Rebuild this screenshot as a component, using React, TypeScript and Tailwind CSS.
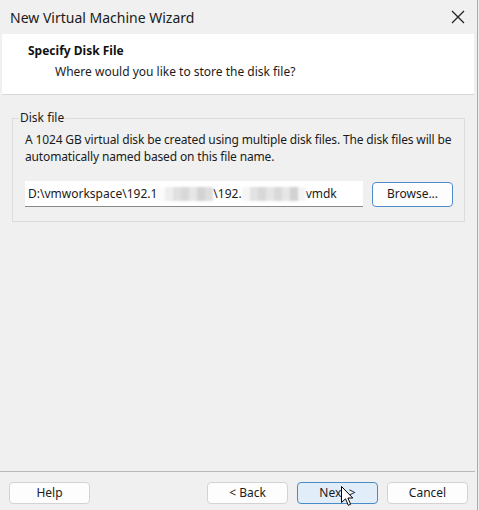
import React from 'react';

const font = "font-['Noto_Sans','Liberation_Sans',sans-serif]";

// pixelated redaction blocks over the path
const Mosaic: React.FC<{ shades: string[] }> = ({ shades }) => (
  <span className="inline-flex h-[14px] align-middle blur-[1px]">
    {shades.map((s, i) => (
      <span key={i} className="inline-block w-[8px] h-full" style={{ backgroundColor: s }} />
    ))}
  </span>
);

const Btn: React.FC<{ label: string; primary?: boolean; className?: string }> = ({ label, primary, className }) => (
  <button
    className={`h-[22px] w-[81px] rounded-[4px] border text-[12px] text-[#1b1b1b] ${
      primary ? 'bg-[#e1eef9] border-[#4a8bc6]' : 'bg-[#fdfdfd] border-[#d3d3d3]'
    } ${className ?? ''}`}
  >
    {label}
  </button>
);

const App: React.FC = () => {
  return (
    <div className={`relative w-[479px] h-[510px] bg-[#f0f0f0] overflow-hidden flex flex-col ${font}`}>
      {/* title bar */}
      <div className="h-[34px] flex items-center justify-between pl-[10px] pr-[14px] shrink-0">
        <span className="text-[14px] text-[#1a1a1a]">New Virtual Machine Wizard</span>
        <svg width="14" height="14" viewBox="0 0 14 14" className="text-[#222]">
          <path d="M1 1L13 13M13 1L1 13" stroke="currentColor" strokeWidth="1.3" />
        </svg>
      </div>

      {/* header */}
      <div className="ml-[2px] mr-[5px] h-[61px] bg-white border-b border-[#d8d8d8] pl-[26px] pt-[8px] shrink-0">
        <div className="text-[12px] font-bold text-[#111] leading-[18px]">Specify Disk File</div>
        <div className="text-[12px] text-[#1b1b1b] leading-[18px] mt-[3px] pl-[27px]">
          Where would you like to store the disk file?
        </div>
      </div>

      {/* body */}
      <div className="flex-1 px-[12px] pt-[16px] mr-[2px]">
        <fieldset className="border border-[#dcdcdc] h-[111px] pl-[12px] pr-[8px] pt-[6px]">
          <legend className="text-[12px] text-[#1b1b1b] px-[1px] -ml-[6px] leading-[14px]">Disk file</legend>
          <p className="text-[12px] text-[#1b1b1b] leading-[17px] tracking-[-0.15px]">
            A 1024 GB virtual disk be created using multiple disk files. The disk files will be automatically named
            based on this file name.
          </p>
          <div className="flex items-center gap-[9px] mt-[16px]">
            <div className="w-[338px] h-[26px] bg-white border-b border-[#8a8a8a] flex items-center pl-[3px] text-[12px] text-[#1b1b1b] whitespace-nowrap overflow-hidden">
              <span>D:\vmworkspace\192.1</span>
              <Mosaic shades={['#fbfbfb', '#eeeeee', '#e0e0e0', '#d8d8d8', '#e6e6e6', '#d3d3d3', '#dedede']} />
              <span>\192.</span>
              <Mosaic shades={['#f6f6f6', '#e2e2e2', '#d8d8d8', '#e5e5e5', '#d9d9d9', '#e6e6e6', '#d2d2d2', '#f4f4f4']} />
              <span>vmdk</span>
            </div>
            <button className="w-[81px] h-[25px] rounded-[4px] border border-[#4f8ccb] bg-[#fdfdfd] text-[12px] text-[#1b1b1b]">
              Browse...
            </button>
          </div>
        </fieldset>
      </div>

      {/* footer */}
      <div className="h-[39px] border-t border-[#b9b9b9] mr-[4px] flex items-start pt-[10px] pl-[9px] pr-[7px] shrink-0">
        <Btn label="Help" />
        <div className="flex-1" />
        <div className="flex gap-[9px]">
          <Btn label="< Back" />
          <Btn label="Next >" primary />
          <Btn label="Cancel" />
        </div>
      </div>

      {/* window right edge */}
      <div className="absolute top-0 right-[1px] w-[1px] h-full bg-[#a9a9a9]" />

      {/* mouse cursor */}
      <svg className="absolute left-[341px] top-[486px]" width="13" height="21" viewBox="0 0 13 21">
        <path d="M0.5 0.5L0.5 16.5L4.5 12.8L7.3 19.3L9.6 18.3L6.9 12L11.8 12Z" fill="#fff" stroke="#000" strokeWidth="1" strokeLinejoin="round" />
      </svg>
    </div>
  );
};

export default App;
